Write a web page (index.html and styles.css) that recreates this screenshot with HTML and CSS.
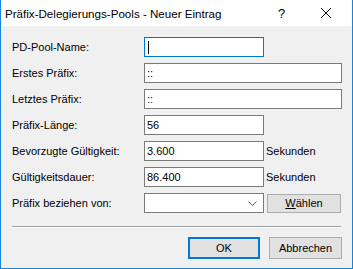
FILE: index.html
```html
<!DOCTYPE html>
<html lang="de">
<head>
    <meta charset="UTF-8">
    <title>Präfix-Delegierungs-Pools - Neuer Eintrag</title>
    <link rel="stylesheet" href="styles.css">
</head>
<body>

<div class="window">
    <div class="titlebar">
        <span class="title">Präfix-Delegierungs-Pools - Neuer Eintrag</span>
        <span class="help">?</span>
        <span class="close">
            <svg width="12" height="12" viewBox="0 0 12 12"><path d="M1 1 L11 11 M11 1 L1 11" stroke="#000" stroke-width="1" fill="none"/></svg>
        </span>
    </div>

    <div class="content">
        <div class="form">
            <label>PD-Pool-Name:</label>
            <div class="field"><div class="input short focused"><span class="caret"></span></div></div>

            <label>Erstes Präfix:</label>
            <div class="field"><div class="input long">::</div></div>

            <label>Letztes Präfix:</label>
            <div class="field"><div class="input long">::</div></div>

            <label>Präfix-Länge:</label>
            <div class="field"><div class="input short">56</div></div>

            <label>Bevorzugte Gültigkeit:</label>
            <div class="field"><div class="input short">3.600</div><span class="unit">Sekunden</span></div>

            <label>Gültigkeitsdauer:</label>
            <div class="field"><div class="input short">86.400</div><span class="unit">Sekunden</span></div>

            <label>Präfix beziehen von:</label>
            <div class="field">
                <div class="input short combo">
                    <svg width="9" height="5" viewBox="0 0 9 5"><path d="M0.5 0.5 L4.5 4.5 L8.5 0.5" stroke="#555" stroke-width="1" fill="none"/></svg>
                </div>
                <button class="btn choose"><u>W</u>ählen</button>
            </div>
        </div>

        <div class="separator"></div>

        <div class="actions">
            <button class="btn default">OK</button>
            <button class="btn">Abbrechen</button>
        </div>
    </div>
</div>

</body>
</html>
```

FILE: styles.css
```css
body {
    margin: 0;
    font-family: "Liberation Sans", Arial, sans-serif;
    font-size: 11px;
    color: #000;
}
.window {
    width: 351px;
    height: 268px;
    background: #f0f0f0;
    border: 1px solid #1883d7;
    border-top: none;
}
.titlebar {
    height: 26px;
    background: #fff;
    display: flex;
    align-items: center;
    font-size: 11.6px;
}
.title {
    margin-left: 4px;
    flex: 1;
}
.help {
    width: 12px;
    margin-right: 30px;
    font-size: 13px;
}
.close {
    display: flex;
    margin-right: 20px;
}
.content {
    padding: 11px 0 0 11px;
}
.form {
    display: grid;
    grid-template-columns: 132px auto;
    row-gap: 6px;
    align-items: center;
}
.field {
    display: flex;
    align-items: center;
    height: 20px;
}
.input {
    box-sizing: border-box;
    height: 20px;
    background: #fff;
    border: 1px solid #7a7a7a;
    padding: 0 0 0 2px;
    line-height: 18px;
}
.short {
    width: 120px;
}
.long {
    width: 198px;
}
.focused {
    border-color: #0078d7;
    display: flex;
    align-items: center;
}
.caret {
    width: 1px;
    height: 13px;
    margin-left: 1px;
    background: #000;
}
.unit {
    margin-left: 2px;
}
.combo {
    display: flex;
    align-items: center;
    justify-content: flex-end;
    padding-right: 6px;
}
.btn {
    box-sizing: border-box;
    font-family: "Liberation Sans", Arial, sans-serif;
    font-size: 11px;
    color: #000;
    background: #e1e1e1;
    border: 1px solid #adadad;
    padding: 0;
    margin: 0;
}
.choose {
    width: 74px;
    height: 19px;
    margin-left: 3px;
}
.separator {
    width: 329px;
    margin-top: 13px;
    border-top: 1px solid #a0a0a0;
    border-bottom: 1px solid #fff;
}
.actions {
    display: flex;
    justify-content: flex-end;
    gap: 9px;
    width: 330px;
    margin-top: 9px;
}
.actions .btn {
    width: 73px;
    height: 22px;
}
.actions .default {
    width: 72px;
    border: 2px solid #0078d7;
}
```
